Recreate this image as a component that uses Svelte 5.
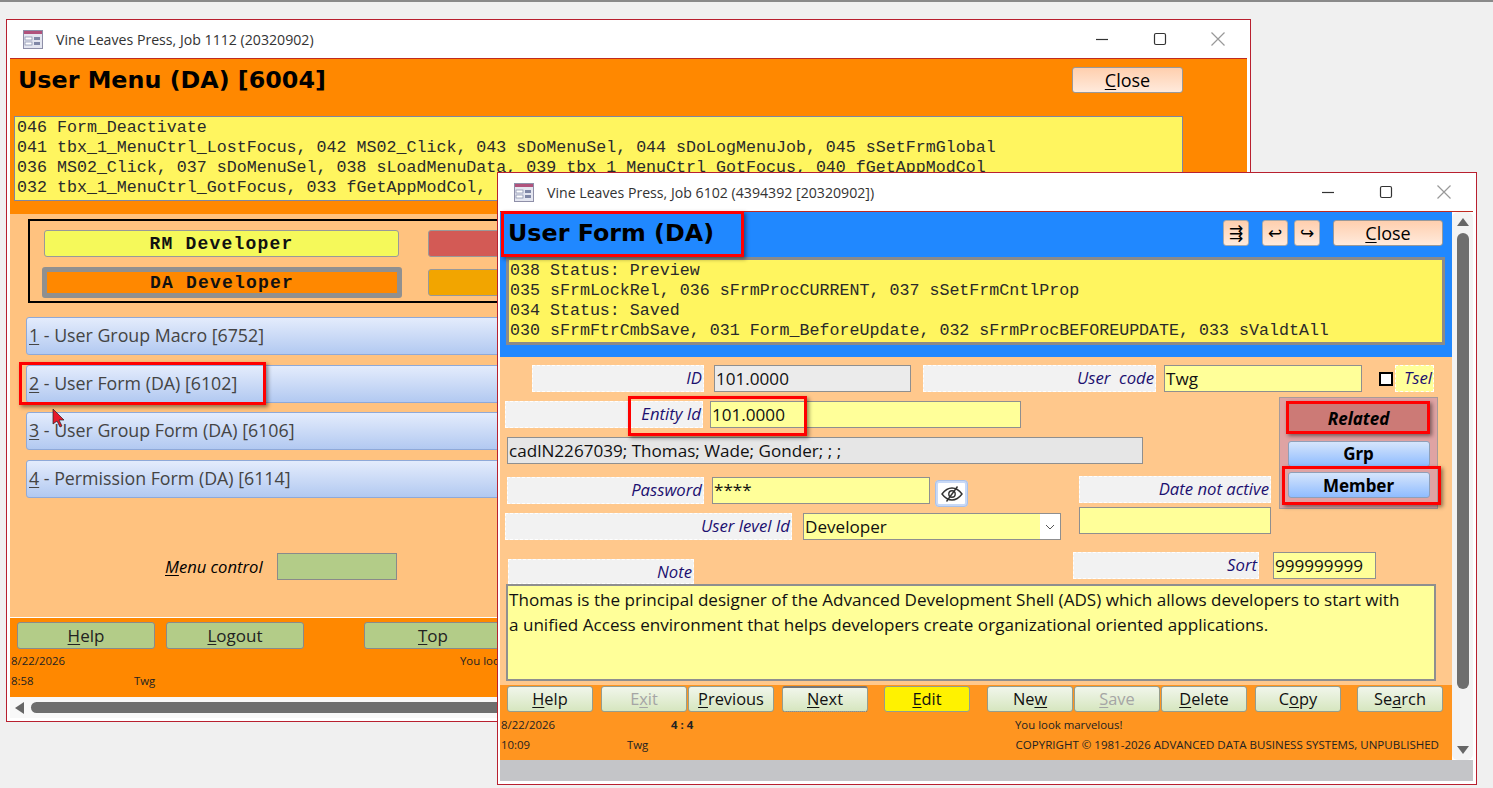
<script>
	// Two overlapping Access form windows with annotation boxes on top
	const backLog = [
		'046 Form_Deactivate',
		'041 tbx_1_MenuCtrl_LostFocus, 042 MS02_Click, 043 sDoMenuSel, 044 sDoLogMenuJob, 045 sSetFrmGlobal',
		'036 MS02_Click, 037 sDoMenuSel, 038 sLoadMenuData, 039 tbx_1_MenuCtrl_GotFocus, 040 fGetAppModCol',
		'032 tbx_1_MenuCtrl_GotFocus, 033 fGetAppModCol,'
	];
	const frontLog = [
		'038 Status: Preview',
		'035 sFrmLockRel, 036 sFrmProcCURRENT, 037 sSetFrmCntlProp',
		'034 Status: Saved',
		'030 sFrmFtrCmbSave, 031 Form_BeforeUpdate, 032 sFrmProcBEFOREUPDATE, 033 sValdtAll'
	];
	const menu = [
		['1', ' - User Group Macro [6752]'],
		['2', ' - User Form (DA) [6102]'],
		['3', ' - User Group Form (DA) [6106]'],
		['4', ' - Permission Form (DA) [6114]']
	];
	// [before, underlined, after, gap to previous button]
	const frontButtons = [
		{ a: '', k: 'H', b: 'elp', gap: 0 },
		{ a: 'E', k: 'x', b: 'it', gap: 8, off: true },
		{ a: '', k: 'P', b: 'revious', gap: 1 },
		{ a: '', k: 'N', b: 'ext', gap: 8, focus: true },
		{ a: '', k: 'E', b: 'dit', gap: 16, edit: true },
		{ a: 'Ne', k: 'w', b: '', gap: 17 },
		{ a: '', k: 'S', b: 'ave', gap: 1, off: true },
		{ a: '', k: 'D', b: 'elete', gap: 1 },
		{ a: 'C', k: 'o', b: 'py', gap: 8 },
		{ a: 'Se', k: 'a', b: 'rch', gap: 16 }
	];
	const marks = [
		{ x: 19, y: 362, w: 247, h: 43 },
		{ x: 501, y: 211, w: 243, h: 46 },
		{ x: 628, y: 396, w: 179, h: 40 },
		{ x: 1286, y: 401, w: 144, h: 33 },
		{ x: 1282, y: 466, w: 159, h: 39 }
	];
</script>

{#snippet formIcon()}
	<svg class="ficon" width="20" height="19" viewBox="0 0 20 19">
		<rect x="0.5" y="0.5" width="19" height="18" fill="#e4e6f0" stroke="#8e8fa8" />
		<rect x="1" y="1" width="18" height="3" fill="#b0527c" />
		<rect x="2" y="7" width="7" height="3" fill="#fff" stroke="#7f87a6" stroke-width="0.7" />
		<rect x="11" y="7" width="6" height="3" fill="#7f87a6" />
		<rect x="2" y="12" width="7" height="3" fill="#fff" stroke="#7f87a6" stroke-width="0.7" />
		<rect x="11" y="12" width="6" height="3" fill="#7f87a6" />
	</svg>
{/snippet}

{#snippet winButtons()}
	<div class="winbtns">
		<svg width="14" height="14" viewBox="0 0 14 14"><path d="M1 7.5h12" stroke="#333" stroke-width="1.2" /></svg>
		<svg width="14" height="14" viewBox="0 0 14 14"><rect x="1.5" y="1.5" width="11" height="11" rx="1.5" fill="none" stroke="#333" stroke-width="1.2" /></svg>
		<svg width="14" height="14" viewBox="0 0 14 14"><path d="M0.5 0.5l13 13M13.5 0.5l-13 13" stroke="#999" stroke-width="1.2" /></svg>
	</div>
{/snippet}

<div class="desk">
	<section class="win back">
		<header class="titlebar">
			{@render formIcon()}
			<span class="wintitle">Vine Leaves Press, Job 1112 (20320902)</span>
			{@render winButtons()}
		</header>
		<div class="inner">
			<div class="head">
				<div class="headrow">
					<h1>User Menu (DA) [6004]</h1>
					<button class="close"><u>C</u>lose</button>
				</div>
				<div class="log">
					{#each backLog as line}<div>{line}</div>{/each}
				</div>
			</div>
			<div class="menubody">
				<div class="roles">
					<button class="role rm">RM Developer</button>
					<button class="role red"></button>
					<button class="role da">DA Developer</button>
					<button class="role amber"></button>
				</div>
				<div class="menulist">
					{#each menu as m}
						<button class="menuitem"><u>{m[0]}</u>{m[1]}</button>
					{/each}
				</div>
				<div class="menuctl">
					<span><u>M</u>enu control</span>
					<div class="ctlbox"></div>
				</div>
			</div>
			<div class="backfoot">
				<div class="footbtns">
					<button class="gbtn"><u>H</u>elp</button>
					<button class="gbtn"><u>L</u>ogout</button>
					<button class="gbtn top"><u>T</u>op</button>
				</div>
				<div class="status back-status">
					<span>8/22/2026</span><span></span><span>You look marvelous!</span>
					<span>8:58</span><span>Twg</span><span></span>
				</div>
			</div>
			<div class="hscroll">
				<svg width="10" height="12" viewBox="0 0 10 12"><path d="M9 0v12L0 6z" fill="#666" /></svg>
				<div class="hthumb"></div>
			</div>
		</div>
	</section>

	<section class="win front">
		<header class="titlebar">
			{@render formIcon()}
			<span class="wintitle">Vine Leaves Press, Job 6102 (4394392 [20320902])</span>
			{@render winButtons()}
		</header>
		<div class="inner">
			<div class="frontrow">
				<div class="main">
					<div class="bluehead">
						<div class="bluerow">
							<h1>User Form (DA)</h1>
							<button class="ico first">⇶</button>
							<button class="ico second">↩</button>
							<button class="ico third">↪</button>
							<button class="close blue"><u>C</u>lose</button>
						</div>
						<div class="log thick">
							{#each frontLog as line}<div>{line}</div>{/each}
						</div>
					</div>

					<div class="form">
						<div class="row r1">
							<label class="lbl l-id">ID</label>
							<div class="fld grey i-id">101.0000</div>
							<label class="lbl l-code">User&nbsp; code</label>
							<div class="fld i-code">Twg</div>
							<span class="check"></span>
							<label class="lbl l-tsel">Tsel</label>
						</div>

						<div class="cols">
							<div class="leftcol">
								<div class="row entity">
									<label class="lbl l-entity">Entity Id</label>
									<div class="fld i-entity">101.0000</div>
								</div>
								<div class="fld grey2 i-name">cadlN2267039; Thomas; Wade; Gonder; ; ;</div>
								<div class="row pass">
									<label class="lbl l-pass">Password</label>
									<div class="fld i-pass">****</div>
									<button class="eye" aria-label="Show password">
										<svg width="22" height="16" viewBox="0 0 22 16">
											<path d="M1 8c3-4 6-6 10-6s7 2 10 6c-3 4-6 6-10 6S4 12 1 8z" fill="none" stroke="#333" stroke-width="1.4" />
											<circle cx="11" cy="8" r="3.2" fill="none" stroke="#333" stroke-width="1.4" />
											<path d="M16.5 0.5L5.5 15.5" stroke="#333" stroke-width="1.4" />
										</svg>
									</button>
								</div>
								<div class="row level">
									<label class="lbl l-level">User level Id</label>
									<div class="fld i-level">
										Developer
										<span class="drop">
											<svg width="10" height="6" viewBox="0 0 10 6"><path d="M1 1l4 4 4-4" fill="none" stroke="#555" /></svg>
										</span>
									</div>
								</div>
							</div>
							<div class="midcol">
								<label class="lbl l-date">Date not active</label>
								<div class="fld i-date"></div>
							</div>
							<div class="panel">
								<button class="rel">Related</button>
								<button class="bluebtn grp">Grp</button>
								<button class="bluebtn mem">Member</button>
							</div>
						</div>

						<div class="row noterow">
							<label class="lbl l-note">Note</label>
							<label class="lbl l-sort">Sort</label>
							<div class="fld i-sort">999999999</div>
						</div>
						<div class="note">
							Thomas is the principal designer of the Advanced Development Shell (ADS) which allows developers to start with<br />
							a unified Access environment that helps developers create organizational oriented applications.
						</div>
					</div>

					<div class="frontfoot">
						<div class="footbtns2">
							{#each frontButtons as b}
								<button
									class="fbtn"
									class:off={b.off}
									class:edit={b.edit}
									class:focus={b.focus}
									style:margin-left="{b.gap}px">{b.a}<u>{b.k}</u>{b.b}</button
								>
							{/each}
						</div>
						<div class="status front-status">
							<span>8/22/2026</span><span></span><b>4 : 4</b><span class="look">You look marvelous!</span>
							<span>10:09</span><span>Twg</span><span class="copy">COPYRIGHT © 1981-2026 ADVANCED DATA BUSINESS SYSTEMS, UNPUBLISHED</span>
						</div>
					</div>
				</div>
				<div class="vscroll">
					<svg width="12" height="8" viewBox="0 0 12 8"><path d="M6 0l6 8H0z" fill="#666" /></svg>
					<div class="vthumb"></div>
					<svg width="12" height="8" viewBox="0 0 12 8"><path d="M0 0h12L6 8z" fill="#666" /></svg>
				</div>
			</div>
			<div class="greystrip"></div>
		</div>
	</section>

	{#each marks as m}
		<div class="mark" style:left="{m.x}px" style:top="{m.y}px" style:width="{m.w}px" style:height="{m.h}px"></div>
	{/each}

	<svg class="cursor" width="14" height="20" viewBox="0 0 14 20">
		<path d="M1 1v15l4-3 3 6 2-1-3-6h5z" fill="#e8192c" stroke="#222" stroke-width="0.7" />
	</svg>
</div>

<style>
	:global(body) {
		background: #f0f0f0;
		overflow: hidden;
	}
	.desk {
		position: relative;
		width: 1493px;
		height: 788px;
		overflow: hidden;
		border-top: 2px solid #8a8a8a;
		box-sizing: border-box;
		font-family: 'Open Sans', sans-serif;
		color: #111;
	}
	button {
		font-family: inherit;
		padding: 0;
		box-sizing: border-box;
		color: inherit;
	}
	u {
		text-underline-offset: 2px;
	}

	/* windows */
	.win {
		position: absolute;
		box-sizing: border-box;
		background: #fff;
		border: 1px solid #b8202f;
		display: flex;
		flex-direction: column;
	}
	.back {
		left: 6px;
		top: 17px;
		width: 1245px;
		height: 703px;
	}
	.front {
		left: 497px;
		top: 170px;
		width: 980px;
		height: 613px;
	}
	.titlebar {
		height: 38px;
		flex: none;
		display: flex;
		align-items: center;
		padding-left: 16px;
		box-sizing: border-box;
	}
	.ficon {
		flex: none;
	}
	.wintitle {
		margin-left: 13px;
		font-size: 14.15px;
		color: #333;
	}
	.winbtns {
		margin-left: auto;
		margin-right: 25px;
		width: 130px;
		display: flex;
		justify-content: space-between;
	}
	.inner {
		flex: 1;
		min-height: 0;
		margin: 0 3px;
		display: flex;
		flex-direction: column;
		border-top: 1px solid #c02a20;
	}
	.front .inner {
		margin: 0 3px 3px 2px;
	}
	h1 {
		margin: 0 0 0 -1px;
		font-family: 'DejaVu Sans', sans-serif;
		font-size: 23.8px;
		font-weight: 700;
		line-height: 42px;
		color: #000;
		white-space: nowrap;
	}
	.log {
		font-family: 'Liberation Mono', monospace;
		font-size: 16.65px;
		line-height: 20px;
		color: #2a2a2a;
		background: #fff55f;
		box-sizing: border-box;
		white-space: nowrap;
		overflow: hidden;
	}
	.close {
		width: 111px;
		height: 26px;
		font-size: 18px;
		line-height: 22px;
		color: #000;
		background: linear-gradient(#ffcfae, #ffeadc);
		border: 1px solid #999;
		border-radius: 3px;
	}

	/* back window */
	.head {
		height: 155px;
		background: #ff8800;
		box-sizing: border-box;
	}
	.headrow {
		height: 57px;
		padding: 0 64px 0 9px;
		display: flex;
		justify-content: space-between;
		align-items: flex-start;
	}
	.headrow .close {
		margin-top: 8px;
	}
	.head .log {
		margin-left: 4px;
		width: 1169px;
		height: 85px;
		padding: 1px 2px;
		border: 1px solid #7f86a0;
	}
	.menubody {
		height: 403px;
		box-sizing: border-box;
		background: #ffc27f;
		padding-top: 5px;
	}
	.roles {
		margin-left: 18px;
		width: 900px;
		height: 84px;
		box-sizing: border-box;
		border: 2px solid #000;
		padding: 9px 0 0 12px;
		display: grid;
		grid-template-columns: 360px 380px;
		grid-template-rows: 27px 31px;
		column-gap: 26px;
		row-gap: 10px;
		align-items: center;
	}
	.role {
		height: 27px;
		border: 1px solid #999;
		border-radius: 3px;
		font-family: 'Liberation Mono', monospace;
		font-weight: 700;
		font-size: 18px;
		letter-spacing: 1.2px;
		color: #111;
	}
	.rm {
		margin: 0 3px 0 2px;
		background: #f5f95a;
	}
	.red {
		background: #d35a55;
	}
	.da {
		height: 31px;
		background: #ff8800;
		border: 5px solid #909090;
	}
	.amber {
		background: #f2a500;
	}
	.menulist {
		margin: 14px 0 0 16px;
		display: flex;
		flex-direction: column;
		gap: 9.5px;
	}
	.menuitem {
		width: 1000px;
		height: 38px;
		text-align: left;
		padding: 0 0 2px 2px;
		font-size: 17.8px;
		color: #444;
		white-space: pre;
		background: linear-gradient(#e4ecfc, #b2c9f1);
		border: 1px solid #8fa9d8;
		border-radius: 3px;
	}
	.menuctl {
		margin: 55px 0 0 155px;
		display: flex;
		align-items: center;
		font-size: 16.6px;
		font-style: italic;
		color: #000;
	}
	.menuctl span {
		width: 112px;
	}
	.ctlbox {
		width: 120px;
		height: 27px;
		box-sizing: border-box;
		background: #b3cc88;
		border: 1px solid #8a8a8a;
	}
	.backfoot {
		height: 80px;
		background: #ff8800;
		border-top: 1px solid #fff;
		box-sizing: border-box;
	}
	.footbtns {
		display: flex;
		padding: 4px 0 0 7px;
		gap: 11px;
	}
	.gbtn {
		width: 138px;
		height: 27px;
		font-size: 17px;
		background: #b3cc88;
		border: 1px solid #8a8a8a;
		border-radius: 3px;
		color: #222;
	}
	.gbtn.top {
		margin-left: 49px;
	}
	.status {
		display: grid;
		font-size: 11.4px;
		line-height: 20px;
		color: #222;
		white-space: nowrap;
	}
	.back-status {
		grid-template-columns: 123px 326px 1fr;
		padding: 2px 0 0 1px;
	}
	.hscroll {
		height: 21px;
		background: #f8f8f8;
		display: flex;
		align-items: center;
		padding-left: 5px;
		margin-bottom: 3px;
	}
	.hthumb {
		margin-left: 6px;
		width: 1170px;
		height: 11px;
		border-radius: 6px;
		background: #6e6e6e;
	}

	/* front window */
	.frontrow {
		display: flex;
		height: 548px;
	}
	.main {
		width: 952px;
		display: flex;
		flex-direction: column;
	}
	.bluehead {
		height: 145px;
		background: #2088ff;
	}
	.bluerow {
		height: 45px;
		display: flex;
		align-items: flex-start;
		padding-left: 9px;
	}
	.ico {
		width: 26px;
		height: 26px;
		margin-top: 8px;
		font-family: 'DejaVu Sans', sans-serif;
		font-size: 17px;
		line-height: 22px;
		color: #000;
		background: linear-gradient(#ffcfae, #ffeadc);
		border: 1px solid #aaa;
		border-radius: 3px;
	}
	.ico.first {
		margin-left: auto;
	}
	.ico.second {
		margin-left: 13px;
	}
	.ico.third {
		margin-left: 6px;
	}
	.close.blue {
		width: 110px;
		margin: 8px 9px 0 13px;
	}
	.log.thick {
		margin-left: 6px;
		width: 939px;
		height: 88px;
		padding: 1px 1px;
		border: 3px solid #8a8a8a;
	}
	.form {
		height: 328px;
		box-sizing: border-box;
		background: #ffc88c;
		padding: 8px 0 0 5px;
		font-size: 17.1px;
	}
	.row {
		display: flex;
		align-items: flex-start;
	}
	.lbl {
		height: 27px;
		box-sizing: border-box;
		flex: none;
		display: flex;
		align-items: center;
		justify-content: flex-end;
		padding: 0 1px 2px 0;
		font-size: 16.7px;
		font-style: italic;
		color: #1c1070;
		background: #f2f2f2;
		border: 1px dashed #fff;
		white-space: nowrap;
	}
	.fld {
		height: 27px;
		box-sizing: border-box;
		flex: none;
		display: flex;
		align-items: center;
		padding-left: 1px;
		background: #ffff99;
		border: 1px solid #8f8f8f;
		color: #111;
		white-space: nowrap;
	}
	.l-id {
		margin-left: 27px;
		width: 172px;
	}
	.grey {
		background: #ebebeb;
	}
	.i-id {
		margin-left: 10px;
		width: 197px;
	}
	.l-code {
		margin-left: 12px;
		width: 233px;
	}
	.i-code {
		margin-left: 8px;
		width: 198px;
	}
	.check {
		margin: 7px 0 0 17px;
		width: 14px;
		height: 14px;
		box-sizing: border-box;
		background: #fff;
		border: 2px solid #000;
		flex: none;
	}
	.l-tsel {
		margin-left: 2px;
		width: 39px;
		background: #ffff99;
	}
	.cols {
		display: flex;
		align-items: flex-start;
		margin-top: 5px;
	}
	.leftcol {
		width: 566px;
		flex: none;
	}
	.entity {
		margin-top: 4px;
	}
	.l-entity {
		width: 198px;
	}
	.i-entity {
		margin-left: 7px;
		width: 311px;
	}
	.grey2 {
		background: #e6e6e6;
	}
	.i-name {
		margin: 9px 0 0 2px;
		width: 636px;
	}
	.pass {
		margin-top: 13px;
	}
	.l-pass {
		margin-left: 2px;
		width: 197px;
	}
	.i-pass {
		margin-left: 8px;
		width: 218px;
		align-items: flex-start;
	}
	.eye {
		margin: 3px 0 0 5px;
		width: 33px;
		height: 27px;
		background: #fff;
		border: 3px solid #c8d9f6;
		outline: 1px solid #a9c0e8;
		outline-offset: -1px;
		border-radius: 4px;
		display: flex;
		align-items: center;
		justify-content: center;
		flex: none;
	}
	.level {
		margin-top: 6px;
	}
	.l-level {
		width: 287px;
	}
	.i-level {
		margin-left: 11px;
		width: 258px;
		position: relative;
	}
	.drop {
		position: absolute;
		right: 0;
		top: 0;
		bottom: 0;
		width: 20px;
		background: #fff;
		display: flex;
		align-items: center;
		justify-content: center;
	}
	.midcol {
		margin: 79px 0 0 8px;
		width: 192px;
		flex: none;
	}
	.l-date,
	.i-date {
		width: 192px;
	}
	.i-date {
		margin-top: 4px;
	}
	.panel {
		margin-left: 8px;
		width: 159px;
		height: 112px;
		box-sizing: border-box;
		background: #dfa3a3;
		border: 1px solid #a79a9a;
		display: flex;
		flex-direction: column;
		align-items: center;
		padding-top: 4px;
	}
	.panel button {
		width: 142px;
		font-family: 'Noto Sans', sans-serif;
		font-size: 17px;
		font-weight: 700;
		color: #000;
		border-radius: 3px;
	}
	.rel {
		height: 31px;
		padding-top: 1px;
		font-style: italic;
		background: #cc7a76;
		border: none;
	}
	.bluebtn {
		height: 26px;
		background: linear-gradient(#d6e5fb, #8fbcff);
		border: 1px solid #8f9fb8;
	}
	.grp {
		margin-top: 8px;
		padding-bottom: 2px;
	}
	.mem {
		margin-top: 5px;
	}
	.noterow {
		margin-top: 12px;
		height: 32px;
	}
	.l-note {
		margin: 7px 0 0 3px;
		height: 25px;
		width: 186px;
		padding-bottom: 0;
	}
	.l-sort {
		margin-left: 379px;
		width: 186px;
	}
	.i-sort {
		margin-left: 14px;
		width: 103px;
	}
	.note {
		margin-left: 1px;
		width: 930px;
		height: 97px;
		box-sizing: border-box;
		padding: 1px 1px;
		font-size: 17.08px;
		line-height: 25px;
		background: #ffff99;
		border: 2px solid #8f8f8f;
		color: #111;
		white-space: nowrap;
	}
	.frontfoot {
		height: 75px;
		background: #ff9520;
	}
	.footbtns2 {
		display: flex;
		padding: 1px 0 0 7px;
	}
	.fbtn {
		width: 86px;
		height: 26px;
		font-size: 16.4px;
		line-height: 22px;
		color: #111;
		background: linear-gradient(#f1f6eb, #d6e6bf);
		border: 1px solid #959d8d;
		border-radius: 3px;
	}
	.fbtn.off {
		color: #a5a5a5;
	}
	.fbtn.edit {
		background: #fff200;
	}
	.fbtn.focus {
		padding-bottom: 1px;
		border-top: 2px solid #777;
		border-bottom: 1px dotted #333;
	}
	.front-status {
		grid-template-columns: 126px 44px 344px 1fr;
		grid-template-rows: 20px 20px;
		padding: 3px 0 0 1px;
	}
	.copy {
		grid-column: 3 / 5;
		justify-self: end;
		padding-right: 13px;
		font-size: 11.54px;
	}
	.vscroll {
		width: 21px;
		background: #f3f3f3;
		display: flex;
		flex-direction: column;
		align-items: center;
		justify-content: space-between;
		padding: 6px 0;
		box-sizing: border-box;
		border-radius: 6px;
	}
	.vthumb {
		width: 12px;
		flex: 1;
		margin: 7px 0 57px;
		border-radius: 6px;
		background: #6e6e6e;
	}
	.greystrip {
		height: 21px;
		background: #c4c5c8;
	}

	/* annotations */
	.mark {
		position: absolute;
		box-sizing: border-box;
		margin-top: -2px;
		border: 3px solid #ff0000;
		box-shadow: 2px 2px 4px rgba(0, 0, 0, 0.45);
	}
	.cursor {
		position: absolute;
		left: 52px;
		top: 406px;
	}
</style>
